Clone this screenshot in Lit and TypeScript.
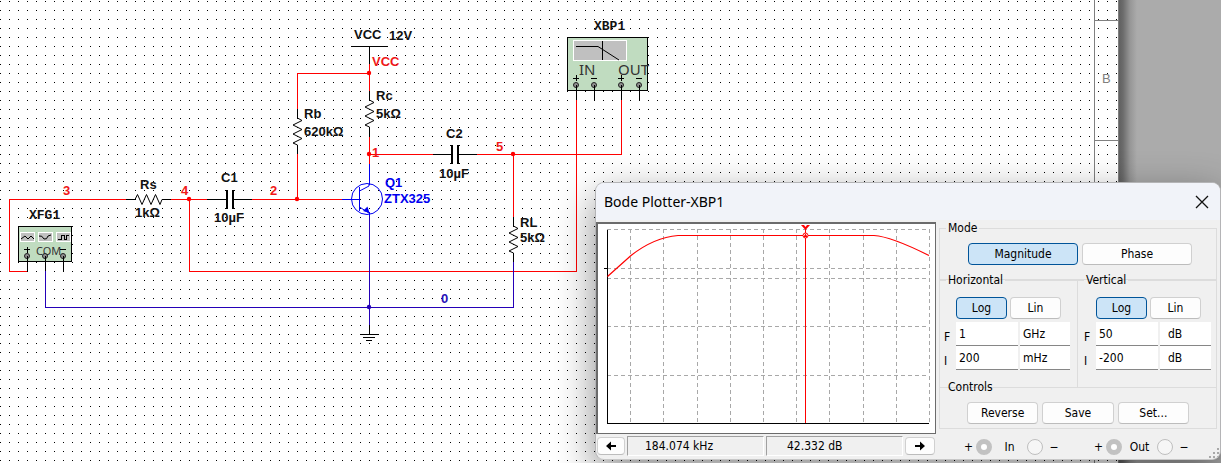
import { LitElement, html, svg, css } from "lit";
import { customElement } from "lit/decorators.js";

/** A run of text on the schematic: x, baseline, text, class. */
type Label = [number, number, string, string];

const LABELS: Label[] = [
  [63, 195, "3", "net"],
  [181, 195, "4", "net"],
  [270, 195, "2", "net"],
  [372, 157, "1", "net"],
  [496, 151, "5", "net"],
  [372, 66, "VCC", "net"],
  [441, 303, "0", "zero"],
  [140, 189, "Rs", "part"],
  [135, 217, "1kΩ", "part"],
  [221, 182, "C1", "part"],
  [214, 222, "10µF", "part"],
  [354, 39, "VCC", "part"],
  [389, 40, "12V", "part"],
  [376, 100, "Rc", "part"],
  [376, 118, "5kΩ", "part"],
  [304, 118, "Rb", "part"],
  [304, 136, "620kΩ", "part"],
  [446, 138, "C2", "part"],
  [439, 178, "10µF", "part"],
  [520, 227, "RL", "part"],
  [520, 242, "5kΩ", "part"],
  [385, 187, "Q1", "blue"],
  [384, 203, "ZTX325", "blue"],
  [29, 219, "XFG1", "instrument"],
  [594, 30, "XBP1", "instrument"],
];

const NODES = [
  [189, 199],
  [297, 199],
  [369, 73],
  [369, 154],
  [513, 154],
];

const PINS = [
  [27, 256, 271],
  [45, 256, 271],
  [63, 256, 271],
  [576, 85, 100],
  [594, 85, 100],
  [621, 85, 100],
  [639, 85, 100],
];

@customElement("circuit-sheet")
class CircuitSheet extends LitElement {
  static styles = css`
    :host {
      display: grid;
      grid-template-columns: minmax(0, 1fr) 102px;
      min-height: 100vh;
    }
    .paper {
      display: grid;
      background: #fff;
    }
    .drawing {
      display: block;
      width: 100%;
      height: 100%;
    }
    .desk {
      background: linear-gradient(90deg, #606060 0, #6c6c6c 4px, #969696 11px, #ababab 18px);
    }
    .lines {
      fill: none;
      stroke-width: 1;
      shape-rendering: crispEdges;
    }
    .red { stroke: #f00; }
    .black { stroke: #000; }
    .ground { stroke: #2400b8; }
    .blue-line { stroke: #0000f0; }
    .frame { stroke: #808080; }
    .smooth { fill: none; stroke-width: 1; }
    .plate { fill: #000; shape-rendering: crispEdges; }
    .dot { fill: #f00; }
    .dot-zero { fill: #2400b8; }
    .case { fill: #c0dcc0; stroke: #000; shape-rendering: crispEdges; }
    .screen { fill: #c0c0c0; stroke: #fff; shape-rendering: crispEdges; }
    .pin { fill: #909090; stroke: #202020; }
    .arrow { fill: #0000f0; }
    text { font: bold 13px "Liberation Sans", Arial, sans-serif; }
    .part { fill: #111; }
    .net { fill: #f01818; }
    .zero { fill: #2810b8; }
    .blue { fill: #0000f0; }
    .instrument { font: bold 13px "Liberation Mono", "Courier New", monospace; fill: #111; }
    .port { font: 15px "Noto Sans", "Open Sans", sans-serif; fill: #333; }
    .com { font: 11px "Noto Sans", "Open Sans", sans-serif; fill: #333; }
    .zone { font: 13px "Liberation Sans", Arial, sans-serif; fill: #808080; }
  `;

  render() {
    return html`
      <div class="paper">
        <svg class="drawing" role="img" aria-label="Common emitter amplifier schematic">
          <defs>
            <pattern id="grid" width="9" height="9" patternUnits="userSpaceOnUse">
              <rect x="0" y="1" width="1" height="1" fill="#000" />
            </pattern>
          </defs>
          <rect width="100%" height="100%" fill="url(#grid)" />
          <path class="lines frame" d="M1094.5 0V463M1118.5 0V463M1094 20.5H1118M1094 140.5H1118" />
          <text class="zone" x="1102" y="83">B</text>

          <rect class="case" x="18.5" y="226.5" width="53" height="35" />
          <rect class="screen" x="20.5" y="232.5" width="14" height="9" />
          <rect class="screen" x="38.5" y="232.5" width="14" height="9" />
          <rect class="screen" x="56.5" y="232.5" width="14" height="9" />
          <path class="smooth black" d="M21 239l4-3 3 3 3-3 3 3M39 236q3-1 5 3 3 1 4-3l3-1" />
          <path class="lines black" d="M58 239.5H61.5V235.5H64.5V239.5H66.5V235.5H69" />
          <rect class="case" x="567.5" y="37.5" width="80" height="53" />
          <rect class="screen" x="573.5" y="40.5" width="53" height="20" />
          <path class="smooth black" d="M576 46.5H598L619 60" />
          <path class="lines black" d="M602.5 41V60" />
          <text class="com" x="36" y="255">COM</text>
          <text class="port" x="579" y="75">IN</text>
          <text class="port" x="618" y="75">OUT</text>
          <path
            class="lines black"
            d="M24 249.5H30M27.5 247V253M60 249.5H66M573 78.5H579M576.5 75V81M591 78.5H597M618 78.5H624M621.5 75V81M636 78.5H642"
          />

          <path
            class="lines red"
            d="M126 199.5H9.5V271.5H27M171 199.5H207M189.5 199V271.5H576.5V100M252 199.5H342M297.5 199V154M297.5 109V73.5H369M369.5 64V91M369.5 137V164M369 154.5H433M477 154.5H621.5V100M513.5 154V217"
          />
          <path
            class="lines black"
            d="M126 199.5H135M162 199.5H171M207 199.5H226M234 199.5H252M297.5 109V118M297.5 145V154M351 46.5H388M369.5 46V64M369.5 91V100M369.5 127V137M433 154.5H451M459 154.5H477M513.5 217V226M513.5 253V262M369.5 325V334M360 334.5H379M363 337.5H375M366 340.5H372"
          />
          <path class="lines ground" d="M45.5 271V307.5H513.5V262M369.5 214V325" />
          <path
            class="smooth black"
            d="M135 199.5L137.500 194.500L142 204.500L146.500 194.500L151 204.500L155.500 194.500L160 204.500L162 199.500
               M297.500 118L302 120.500L293 125L302 129.500L293 134L302 138.500L293 143L297.500 145
               M369.500 100L374 102.500L365 107L374 111.500L365 116L374 120.500L365 125L369.500 127
               M513.500 226L518 228.500L509 233L518 237.500L509 242L518 246.500L509 251L513.500 253"
          />
          <path class="plate" d="M226 190h2v19h-2zM232 190h2v19h-2zM451 145h2v19h-2zM457 145h2v19h-2z" />
          <path class="lines blue-line" d="M342 199.5H359M359.5 187V211M369.5 164V185M369.5 212V216" />
          <circle class="smooth blue-line" cx="367" cy="199" r="15.5" />
          <path class="smooth blue-line" d="M359.500 191L369 186V184M359.500 207L369 213" />
          <path class="arrow" d="M363 211L367.500 206.500L369.500 213z" />
          ${NODES.map(([x, y]) => svg`<circle class="dot" cx=${x} cy=${y} r="2.2" />`)}
          <circle class="dot-zero" cx="369" cy="307" r="2.2" />
          ${PINS.map(
            ([x, y, end]) => svg`
              <circle class="pin" cx=${x} cy=${y} r="2.5" />
              <path class="lines black" d="M${x + 0.5} ${y}V${end}" />`
          )}
          ${LABELS.map(([x, y, t, c]) => svg`<text class=${c} x=${x} y=${y}>${t}</text>`)}
        </svg>
      </div>
      <div class="desk"></div>
    `;
  }
}

@customElement("bode-plotter")
class BodePlotter extends LitElement {
  static styles = css`
    :host {
      display: block;
      box-sizing: border-box;
      border: 1px solid #b4b4b6;
      border-bottom-color: #c8c8c8;
      border-radius: 9px;
      overflow: hidden;
      background: #f0f0f0;
      color: #000;
      font: 12px/16px "DejaVu Sans Condensed", "Noto Sans", sans-serif;
      box-shadow: 0 14px 40px rgba(0, 0, 0, 0.45);
    }
    .title {
      display: flex;
      align-items: center;
      justify-content: space-between;
      height: 37px;
      padding: 0 10px 0 8px;
      background: #f1f3f9;
      font: 14px/20px "Noto Sans", "Open Sans", sans-serif;
    }
    h1 {
      margin: 0;
      font: inherit;
    }
    button,
    input {
      box-sizing: border-box;
      margin: 0;
      font: inherit;
      color: inherit;
    }
    button {
      display: grid;
      place-items: center;
      height: 22px;
      padding: 0;
      border: 1px solid #d0d0d0;
      border-bottom-color: #bcbcbc;
      border-radius: 4px;
      background: #fdfdfd;
    }
    button[aria-pressed="true"] {
      border-color: #005499;
      background: #cce4f7;
    }
    .close {
      width: 16px;
      border: 0;
      background: none;
    }
    .body {
      display: grid;
      grid-template-columns: minmax(0, 1fr) 278px;
      column-gap: 3px;
      padding: 0 3px 3px 0;
    }
    .left {
      padding-top: 2px;
    }
    .screen {
      padding: 1px;
      border: 2px solid #6b6b6b;
      border-right-width: 1px;
      border-bottom-width: 1px;
      background: #fff;
    }
    .plot {
      display: block;
      width: 100%;
      height: 207px;
    }
    .grid { fill: none; stroke: #a8a8a8; stroke-dasharray: 4 3; shape-rendering: crispEdges; }
    .axis { fill: none; stroke: #000; shape-rendering: crispEdges; }
    .curve { fill: none; stroke: #f00; stroke-width: 1.2; }
    .cursor { stroke: #f00; shape-rendering: crispEdges; }
    .handle { fill: #f00; }
    .spot { fill: #fff; stroke: #f00; }
    .status {
      display: grid;
      grid-template-columns: 28px 1fr 1fr 30px;
      gap: 2px;
      margin-top: 2px;
      padding: 0 1px;
    }
    .status button {
      height: 18px;
      margin-top: 1px;
    }
    output {
      height: 18px;
      padding-left: 17px;
      border: 1px solid #a0a0a0;
      border-right-color: #fff;
      border-bottom-color: #fff;
      line-height: 18px;
    }
    output + output {
      padding-left: 20px;
    }
    fieldset {
      min-width: 0;
      margin: 0;
      padding: 0;
      border: 1px solid #dcdcdc;
    }
    legend {
      margin-left: 6px;
      padding: 0 2px;
    }
    .mode,
    .actions {
      display: grid;
      gap: 4px;
    }
    .mode {
      grid-template-columns: 1fr 1fr;
      padding: 7px 24px 14px 28px;
    }
    .actions {
      grid-template-columns: 1fr 1fr 1fr;
      padding: 7px 27px 4px;
    }
    .axes {
      display: grid;
      grid-template-columns: 1fr 1fr;
      margin-top: -8px;
    }
    .axes fieldset + fieldset {
      border-left: 0;
    }
    .scale {
      display: grid;
      grid-template-columns: 51px 51px;
      gap: 3px;
      padding: 9px 0 3px 16px;
    }
    .range {
      display: grid;
      grid-template-columns: 10px 62px 1fr;
      column-gap: 2px;
      padding: 0 7px 17px 4px;
    }
    .range input {
      width: 100%;
      height: 24px;
      padding: 0 3px;
      border: 0;
      border-bottom: 1px solid #868686;
      border-radius: 0;
      background: #fff;
    }
    .vertical .scale {
      padding-left: 18px;
    }
    .vertical .range {
      padding-left: 6px;
      padding-right: 5px;
    }
    .vertical .unit {
      padding-left: 8px;
    }
    .range label {
      align-self: end;
      line-height: 18px;
    }
    .controls {
      margin-top: -9px;
    }
    .terminals {
      display: grid;
      grid-template-columns: 130px 1fr;
      padding: 10px 0 0 25px;
    }
    .pair {
      display: flex;
      align-items: center;
      gap: 3px;
    }
    .pair label {
      display: flex;
      align-items: center;
      gap: 3px;
    }
    .port {
      width: 29px;
      text-align: center;
    }
    .pair input {
      appearance: none;
      width: 16px;
      height: 16px;
      border: 1px solid #bebebe;
      border-radius: 50%;
      background: #f6f6f6;
    }
    .pair input:checked {
      border: 5px solid #c2c2c2;
      background: #fff;
    }
    .grip {
      position: absolute;
      right: 1px;
      bottom: 1px;
      width: 10px;
      height: 10px;
      fill: #a8a8a8;
    }
  `;

  private plot() {
    const columns = [630, 663, 697, 730, 763, 796, 829, 863, 896, 929];
    const rows = [229, 268, 278, 326, 375];
    return html`
      <svg class="plot" viewBox="599 225 335 207" preserveAspectRatio="xMinYMin meet" role="img" aria-label="Magnitude response">
        ${columns.map((x) => svg`<path class="grid" d="M${x + 0.5} 229V423" />`)}
        ${rows.map((y) => svg`<path class="grid" d="M607 ${y + 0.5}H929" />`)}
        <path class="axis" d="M607.5 230V423.5H929M604 268.5H607" />
        <path class="cursor" d="M805.5 229V423" />
        <path class="curve" d="M607.500 276.500L631 255.500Q654 237.500 678 235.500H874Q891 236.500 929 255.500" />
        <path class="handle" d="M801 225h3l1.500 2 1.500-2h3l-4.500 5z" />
        <circle class="spot" cx="805.5" cy="235.5" r="2.5" />
        <path class="handle" d="M805.500 233.500l2 3.500h-4z" />
      </svg>
    `;
  }

  private axis(name: string, id: string, rows: [string, string, string][]) {
    return html`
      <fieldset class=${id}>
        <legend>${name}</legend>
        <div class="scale">
          <button type="button" aria-pressed="true">Log</button>
          <button type="button" aria-pressed="false">Lin</button>
        </div>
        <div class="range">
          ${rows.map(
            ([key, value, unit]) => html`
              <label for="${id}-${key}">${key}</label>
              <input id="${id}-${key}" .value=${value} />
              <input class="unit" aria-label="${name} ${key} unit" .value=${unit} />
            `
          )}
        </div>
      </fieldset>
    `;
  }

  private terminals(name: string) {
    return html`
      <div class="pair" role="radiogroup" aria-label=${name}>
        <label>+<input type="radio" name=${name} checked /></label>
        <span class="port">${name}</span>
        <label><input type="radio" name=${name} />&nbsp;−</label>
      </div>
    `;
  }

  render() {
    return html`
      <header class="title">
        <h1>Bode Plotter-XBP1</h1>
        <button class="close" type="button" aria-label="Close">
          <svg width="14" height="14" fill="none" stroke="#111" stroke-width="1.3">
            <path d="M1 1L13 13M13 1L1 13" />
          </svg>
        </button>
      </header>
      <div class="body">
        <section class="left">
          <div class="screen">${this.plot()}</div>
          <div class="status">
            <button type="button" aria-label="Move cursor left">
              <svg width="10" height="10"><path d="M0 5L5 0.500V4H10V6H5V9.500z" /></svg>
            </button>
            <output>184.074 kHz</output>
            <output>42.332 dB</output>
            <button type="button" aria-label="Move cursor right">
              <svg width="10" height="10"><path d="M10 5L5 0.500V4H0V6H5V9.500z" /></svg>
            </button>
          </div>
        </section>
        <section>
          <fieldset>
            <legend>Mode</legend>
            <div class="mode">
              <button type="button" aria-pressed="true">Magnitude</button>
              <button type="button" aria-pressed="false">Phase</button>
            </div>
          </fieldset>
          <div class="axes">
            ${this.axis("Horizontal", "horizontal", [["F", "1", "GHz"], ["I", "200", "mHz"]])}
            ${this.axis("Vertical", "vertical", [["F", "50", "dB"], ["I", "-200", "dB"]])}
          </div>
          <fieldset class="controls">
            <legend>Controls</legend>
            <div class="actions">
              <button type="button">Reverse</button>
              <button type="button">Save</button>
              <button type="button">Set...</button>
            </div>
          </fieldset>
          <div class="terminals">${this.terminals("In")}${this.terminals("Out")}</div>
        </section>
      </div>
      <svg class="grip" viewBox="0 0 10 10" aria-hidden="true">
        <path d="M8 0h2v2h-2zM4 4h2v2h-2zM8 4h2v2h-2zM0 8h2v2h-2zM4 8h2v2h-2zM8 8h2v2h-2z" />
      </svg>
    `;
  }
}

@customElement("app-root")
class AppRoot extends LitElement {
  static styles = css`
    :host {
      display: block;
      position: relative;
      overflow: hidden;
    }
    .floating {
      position: absolute;
      top: 182px;
      left: 595px;
      right: 0;
    }
  `;

  render() {
    return html`
      <circuit-sheet></circuit-sheet>
      <bode-plotter class="floating"></bode-plotter>
    `;
  }
}
